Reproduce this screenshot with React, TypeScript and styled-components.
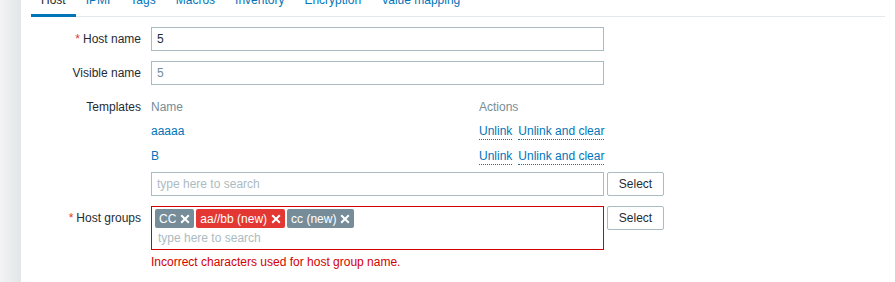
import React from "react";
import styled, { createGlobalStyle } from "styled-components";

const Global = createGlobalStyle`
  html, body { margin: 0; padding: 0; background: #ebeef0; }
  body { font-family: "Liberation Sans", Arial, sans-serif; font-size: 12px; color: #1f2c33; overflow: hidden; }
`;

const Page = styled.div`
  display: flex;
  height: 282px;
  background: linear-gradient(to right, #f2f3f4 0px, #e3e7ea 20px);
`;

const Panel = styled.div`
  margin-left: 21px;
  flex: 1;
  background: #fff;
  padding: 0 10px;
`;

const TabBar = styled.div`
  display: flex;
  margin-top: -10px;
  border-bottom: 1px solid #e3e8ec;
  height: 26px;
`;

const Tab = styled.div<{ $active?: boolean }>`
  padding: 0 10px;
  line-height: 21px;
  white-space: nowrap;
  color: ${(p) => (p.$active ? "#1f2c33" : "#0275b8")};
  border-bottom: 3px solid ${(p) => (p.$active ? "#0275b8" : "transparent")};
  height: 27px;
  margin-bottom: -1px;
  box-sizing: border-box;
`;

const Form = styled.div`
  display: grid;
  grid-template-columns: 110px 1fr;
  column-gap: 10px;
  padding-top: 10px;
`;

const Label = styled.div<{ $top?: number }>`
  text-align: right;
  padding-top: ${(p) => p.$top ?? 5}px;
  line-height: 14px;
  white-space: nowrap;
`;

const Req = styled.span`
  color: #e33734;
  margin-right: 3px;
`;

const Field = styled.div<{ $pb?: number }>`
  padding-bottom: ${(p) => p.$pb ?? 10}px;
`;

const Input = styled.div<{ $muted?: boolean }>`
  width: 453px;
  height: 24px;
  box-sizing: border-box;
  border: 1px solid #acbbc2;
  padding: 0 5px;
  line-height: 22px;
  color: ${(p) => (p.$muted ? "#768d99" : "#1f2c33")};
`;

const Placeholder = styled.span`
  color: #acbbc2;
`;

const Line = styled.div`
  display: flex;
  align-items: flex-start;
  gap: 3px;
`;

const Button = styled.div`
  width: 57px;
  height: 24px;
  box-sizing: border-box;
  border: 1px solid #acbbc2;
  border-radius: 2px;
  text-align: center;
  line-height: 22px;
  color: #1f2c33;
`;

const Table = styled.div`
  display: grid;
  grid-template-columns: 328px auto;
  width: 453px;
  margin-bottom: 3px;
`;

const Head = styled.div`
  color: #768d99;
  height: 24px;
  line-height: 14px;
  padding-top: 5px;
  box-sizing: border-box;
`;

const Cell = styled.div`
  height: 25px;
  line-height: 14px;
  padding-top: 5px;
  box-sizing: border-box;
  display: flex;
  gap: 6px;
  white-space: nowrap;
`;

const Link = styled.span<{ $dotted?: boolean }>`
  color: #0275b8;
  ${(p) => (p.$dotted ? "border-bottom: 1px dotted #0275b8; height: 15px;" : "")}
`;

const Multi = styled.div`
  width: 453px;
  height: 44px;
  box-sizing: border-box;
  border: 1px solid #d40000;
  padding: 2px 3px;
`;

const Tags = styled.div`
  display: flex;
  gap: 2px;
`;

const Tag = styled.span<{ $error?: boolean }>`
  display: inline-flex;
  align-items: center;
  height: 19px;
  padding: 0 4px;
  border-radius: 2px;
  background: ${(p) => (p.$error ? "#e33734" : "#768d99")};
  color: #fff;
  font-size: 12px;
  gap: 4px;
  white-space: nowrap;
`;

const X = styled.svg`
  width: 10px;
  height: 10px;
`;

const MultiInput = styled.div`
  padding: 3px 3px 0;
  line-height: 14px;
  color: #acbbc2;
`;

const Error = styled.div`
  color: #d40000;
  padding-top: 5px;
  line-height: 14px;
`;

const Close = () => (
  <X viewBox="0 0 10 10">
    <path d="M1.2 1.2 L8.8 8.8 M8.8 1.2 L1.2 8.8" stroke="#fff" strokeWidth="2" />
  </X>
);

export default function App() {
  return (
    <>
      <Global />
      <Page>
        <Panel>
          <TabBar>
            <Tab $active>Host</Tab>
            <Tab>IPMI</Tab>
            <Tab>Tags</Tab>
            <Tab>Macros</Tab>
            <Tab>Inventory</Tab>
            <Tab>Encryption</Tab>
            <Tab>Value mapping</Tab>
          </TabBar>
          <Form>
            <Label><Req>*</Req>Host name</Label>
            <Field>
              <Input>5</Input>
            </Field>
            <Label>Visible name</Label>
            <Field>
              <Input $muted>5</Input>
            </Field>
            <Label>Templates</Label>
            <Field>
              <Table>
                <Head>Name</Head>
                <Head>Actions</Head>
                <Cell><Link>aaaaa</Link></Cell>
                <Cell><Link $dotted>Unlink</Link><Link $dotted>Unlink and clear</Link></Cell>
                <Cell><Link>B</Link></Cell>
                <Cell><Link $dotted>Unlink</Link><Link $dotted>Unlink and clear</Link></Cell>
              </Table>
              <Line>
                <Input><Placeholder>type here to search</Placeholder></Input>
                <Button>Select</Button>
              </Line>
            </Field>
            <Label><Req>*</Req>Host groups</Label>
            <Field>
              <Line>
                <Multi>
                  <Tags>
                    <Tag>CC <Close /></Tag>
                    <Tag $error>aa//bb (new) <Close /></Tag>
                    <Tag>cc (new) <Close /></Tag>
                  </Tags>
                  <MultiInput>type here to search</MultiInput>
                </Multi>
                <Button>Select</Button>
              </Line>
              <Error>Incorrect characters used for host group name.</Error>
            </Field>
          </Form>
        </Panel>
      </Page>
    </>
  );
}
